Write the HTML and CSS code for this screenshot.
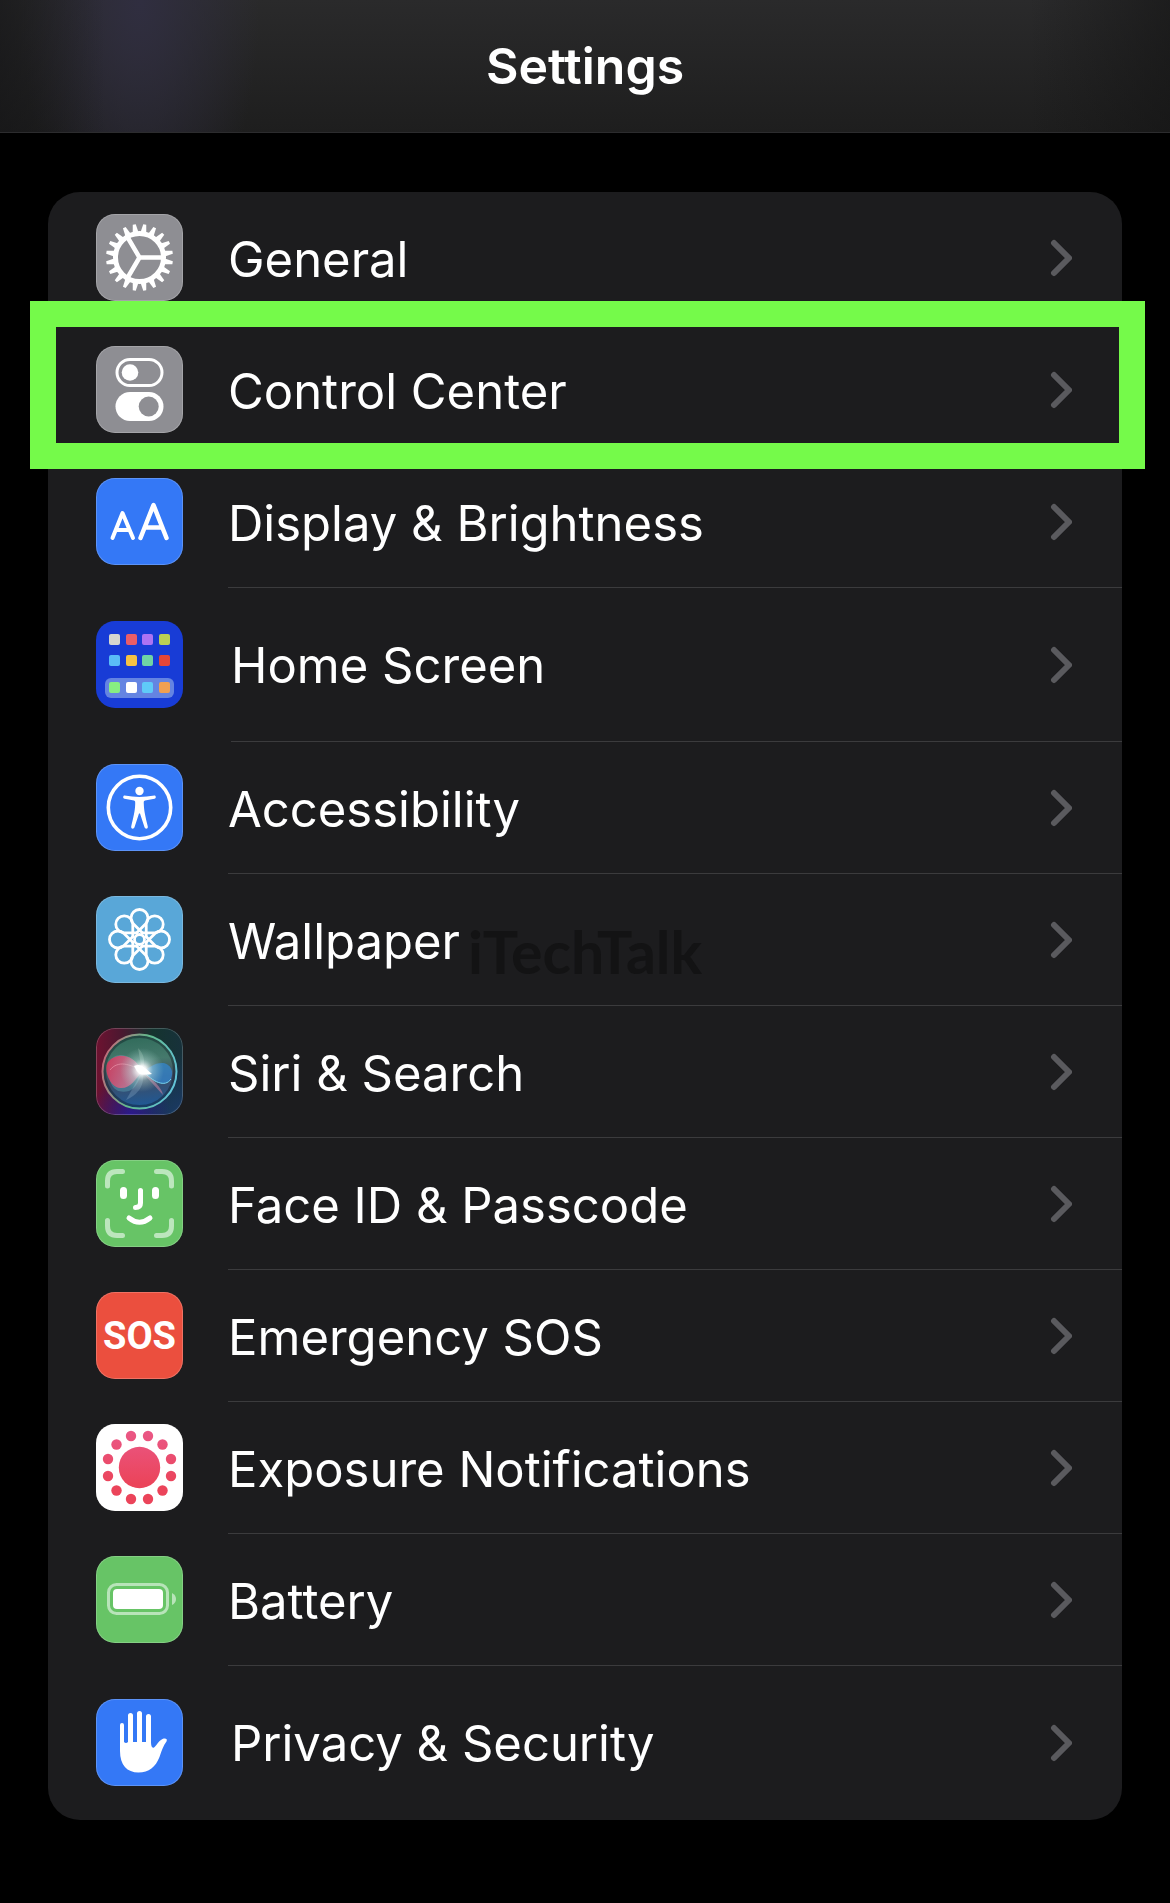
FILE: index.html
```html
<!DOCTYPE html>
<html lang="en">
<head>
    <meta charset="UTF-8">
    <meta name="viewport" content="width=device-width, initial-scale=1.0">
    <title>Settings</title>
    <link rel="stylesheet" href="styles.css">
</head>
<body>
    <header class="navbar">
        <h1>Settings</h1>
    </header>

    <main class="content">
        <ul class="settings-list">
            <li>
                <a class="row" href="#general">
                    <svg class="icon gray" viewBox="0 0 87 87">
                        <circle cx="43.5" cy="43.5" r="24" fill="none" stroke="#fff" stroke-width="5"/>
                        <path d="M43.5 43.5H66M43.5 43.5L32 24M43.5 43.5L32 63" fill="none" stroke="#fff" stroke-width="4.5"/>
                        <g id="teeth" fill="#fff"></g>
                    </svg>
                    <span class="label">General</span>
                    <svg class="chevron" viewBox="0 0 22 38"><path d="M4 4l15 15L4 34"/></svg>
                </a>
            </li>
            <li class="highlighted">
                <a class="row" href="#control-center">
                    <svg class="icon gray" viewBox="0 0 87 87">
                        <rect x="21" y="13.5" width="45" height="26" rx="13" fill="none" stroke="#fff" stroke-width="3"/>
                        <circle cx="34" cy="26.5" r="8.3" fill="#fff"/>
                        <rect x="19.5" y="46" width="48" height="29" rx="14.5" fill="#fff"/>
                        <circle cx="52.7" cy="60.5" r="10" fill="#8e8e93"/>
                    </svg>
                    <span class="label">Control Center</span>
                    <svg class="chevron" viewBox="0 0 22 38"><path d="M4 4l15 15L4 34"/></svg>
                </a>
            </li>
            <li>
                <a class="row" href="#display">
                    <svg class="icon blue" viewBox="0 0 87 87">
                        <g fill="none" stroke="#fff" stroke-linecap="round" stroke-linejoin="round">
                            <path d="M16.5 60L26.5 35L37 60M20 52H33" stroke-width="4"/>
                            <path d="M44.5 60L57.5 27L70.5 60M49 49.5H66" stroke-width="4.5"/>
                        </g>
                    </svg>
                    <span class="label">Display &amp; Brightness</span>
                    <svg class="chevron" viewBox="0 0 22 38"><path d="M4 4l15 15L4 34"/></svg>
                </a>
            </li>
            <li>
                <a class="row tall" href="#home-screen">
                    <svg class="icon navy" viewBox="0 0 87 87">
                        <rect x="9" y="57" width="69" height="20" rx="6" fill="#6484e2"/>
                        <rect x="13" y="13" width="11" height="11" rx="2" fill="#d6d7cf"/>
                        <rect x="30" y="13" width="11" height="11" rx="2" fill="#ea5d68"/>
                        <rect x="46" y="13" width="11" height="11" rx="2" fill="#ac73f4"/>
                        <rect x="63" y="13" width="11" height="11" rx="2" fill="#b9d054"/>
                        <rect x="13" y="34" width="11" height="11" rx="2" fill="#5abcf7"/>
                        <rect x="30" y="34" width="11" height="11" rx="2" fill="#f6c244"/>
                        <rect x="46" y="34" width="11" height="11" rx="2" fill="#6fd5a5"/>
                        <rect x="63" y="34" width="11" height="11" rx="2" fill="#e54637"/>
                        <rect x="13" y="61" width="11" height="11" rx="2" fill="#87ee82"/>
                        <rect x="30" y="61" width="11" height="11" rx="2" fill="#fff"/>
                        <rect x="46" y="61" width="11" height="11" rx="2" fill="#5fcaf8"/>
                        <rect x="63" y="61" width="11" height="11" rx="2" fill="#f0a052"/>
                    </svg>
                    <span class="label">Home Screen</span>
                    <svg class="chevron" viewBox="0 0 22 38"><path d="M4 4l15 15L4 34"/></svg>
                </a>
            </li>
            <li>
                <a class="row" href="#accessibility">
                    <svg class="icon blue" viewBox="0 0 87 87">
                        <circle cx="43.5" cy="43.5" r="31.2" fill="none" stroke="#fff" stroke-width="3.6"/>
                        <circle cx="43.5" cy="27" r="4.2" fill="#fff"/>
                        <path d="M28.5 31.6C27 31.6 26.5 34.4 28.5 34.8L38 36.5C39.3 36.8 39.3 38 39.2 40C39 47 37.5 53 35.2 62.5C34.8 65 37.8 65.5 38.5 63.3L43 49.5H44L48.5 63.3C49.2 65.5 52.2 65 51.8 62.5C49.5 53 48 47 47.8 40C47.7 38 47.7 36.8 49 36.5L58.5 34.8C60.5 34.4 60 31.6 58.5 31.6C48 33.5 39 33.5 28.5 31.6Z" fill="#fff"/>
                    </svg>
                    <span class="label">Accessibility</span>
                    <svg class="chevron" viewBox="0 0 22 38"><path d="M4 4l15 15L4 34"/></svg>
                </a>
            </li>
            <li>
                <a class="row" href="#wallpaper">
                    <svg class="icon sky" viewBox="0 0 87 87">
                        <g id="petals" fill="none" stroke="#fff" stroke-width="2.8"></g>
                        <circle cx="43.5" cy="43.5" r="5" fill="none" stroke="#fff" stroke-width="2.8"/>
                    </svg>
                    <span class="label">Wallpaper</span>
                    <svg class="chevron" viewBox="0 0 22 38"><path d="M4 4l15 15L4 34"/></svg>
                </a>
            </li>
            <li>
                <a class="row" href="#siri">
                    <svg class="icon siri" viewBox="0 0 87 87">
                        <defs>
                            <linearGradient id="siriOrb" x1="0.4" y1="0" x2="0.5" y2="1">
                                <stop offset="0" stop-color="#2f6a59"/>
                                <stop offset="0.35" stop-color="#45796c"/>
                                <stop offset="0.6" stop-color="#3f4c62"/>
                                <stop offset="1" stop-color="#1d5a9a"/>
                            </linearGradient>
                            <linearGradient id="siriRim" x1="0" y1="0.3" x2="1" y2="0.6">
                                <stop offset="0" stop-color="#c4697a"/>
                                <stop offset="0.5" stop-color="#61b98c"/>
                                <stop offset="1" stop-color="#62c3d8"/>
                            </linearGradient>
                            <linearGradient id="siriPink" x1="0" y1="0" x2="1" y2="0.3">
                                <stop offset="0" stop-color="#e02c53"/>
                                <stop offset="1" stop-color="#c783a0"/>
                            </linearGradient>
                            <radialGradient id="siriGlow">
                                <stop offset="0" stop-color="#fff"/>
                                <stop offset="0.2" stop-color="#fff" stop-opacity="0.9"/>
                                <stop offset="0.5" stop-color="#c5e8e4" stop-opacity="0.4"/>
                                <stop offset="1" stop-color="#9fd5cb" stop-opacity="0"/>
                            </radialGradient>
                        </defs>
                        <circle cx="43.5" cy="43.5" r="37" fill="url(#siriOrb)"/>
                        <circle cx="43.5" cy="43.5" r="35" fill="none" stroke="#0c1620" stroke-opacity="0.4" stroke-width="3"/>
                        <circle cx="43.5" cy="43.5" r="37" fill="none" stroke="url(#siriRim)" stroke-width="2"/>
                        <path d="M46 43C36 24 18 22 12 36C12 60 20 66 33 63C40 61 44 50 46 43Z" fill="#5aa5b5" fill-opacity="0.45"/>
                        <path d="M46 43C38 25 20 24 12 34C7 42 14 59 24 60C34 61 40 51 46 43Z" fill="url(#siriPink)" fill-opacity="0.85"/>
                        <path d="M14 42C22 32 34 36 46 43" fill="none" stroke="#f1a0b4" stroke-opacity="0.6"/>
                        <path d="M47 43C57 54 69 60 75 51C79 42 73 35 66 35C58 35 53 40 47 43Z" fill="#3387cf" fill-opacity="0.75"/>
                        <path d="M47 43C57 54 69 60 75 51" fill="none" stroke="#76d8f4"/>
                        <path d="M46 44L30 72C42 67 50 56 46 44Z" fill="#a9c8df" fill-opacity="0.25"/>
                        <path d="M46 44L67 67C66 60 57 51 46 44Z" fill="#c2819f" fill-opacity="0.6"/>
                        <path d="M46 43L42 20C48 26 50 34 46 43Z" fill="#c2dfce" fill-opacity="0.25"/>
                        <circle cx="46" cy="42" r="22" fill="url(#siriGlow)"/>
                        <path d="M38 38Q44 35 49 40L56 46Q49 47 44 46Q40 43 38 38Z" fill="#fff"/>
                    </svg>
                    <span class="label">Siri &amp; Search</span>
                    <svg class="chevron" viewBox="0 0 22 38"><path d="M4 4l15 15L4 34"/></svg>
                </a>
            </li>
            <li>
                <a class="row" href="#face-id">
                    <svg class="icon green" viewBox="0 0 87 87">
                        <g fill="none" stroke-linecap="round">
                            <path d="M11.5 26V21Q11.5 11.5 21 11.5H26.5M60.5 11.5H66Q75.5 11.5 75.5 21V26M75.5 60.5V66Q75.5 75.5 66 75.5H60.5M26.5 75.5H21Q11.5 75.5 11.5 66V60.5" stroke="#bce6bd" stroke-width="5"/>
                            <path d="M27.5 30.5V35.5M59.5 30.5V35.5" stroke="#fff" stroke-width="7"/>
                            <path d="M44.5 30.5V43Q44.5 47.5 39.5 47.5" stroke="#fff" stroke-width="5"/>
                            <path d="M33 58Q43.5 66.5 54 58" stroke="#fff" stroke-width="5"/>
                        </g>
                    </svg>
                    <span class="label">Face ID &amp; Passcode</span>
                    <svg class="chevron" viewBox="0 0 22 38"><path d="M4 4l15 15L4 34"/></svg>
                </a>
            </li>
            <li>
                <a class="row" href="#sos">
                    <span class="icon red sos">SOS</span>
                    <span class="label">Emergency SOS</span>
                    <svg class="chevron" viewBox="0 0 22 38"><path d="M4 4l15 15L4 34"/></svg>
                </a>
            </li>
            <li>
                <a class="row" href="#exposure">
                    <svg class="icon white" viewBox="0 0 87 87">
                        <defs>
                            <linearGradient id="exposure" gradientUnits="userSpaceOnUse" x1="0" y1="8" x2="0" y2="60">
                                <stop offset="0" stop-color="#ea5785"/>
                                <stop offset="1" stop-color="#eb445a"/>
                            </linearGradient>
                        </defs>
                        <g fill="url(#exposure)">
                            <circle cx="43.5" cy="43.5" r="20.7"/>
                            <circle cx="35" cy="12" r="5.2"/>
                            <circle cx="52" cy="12" r="5.2"/>
                            <circle cx="20.5" cy="20.5" r="5.2"/>
                            <circle cx="66.5" cy="20.5" r="5.2"/>
                            <circle cx="12" cy="35" r="5.2"/>
                            <circle cx="75" cy="35" r="5.2"/>
                            <circle cx="12" cy="52" r="5.2"/>
                            <circle cx="75" cy="52" r="5.2"/>
                            <circle cx="20.5" cy="66.5" r="5.2"/>
                            <circle cx="66.5" cy="66.5" r="5.2"/>
                            <circle cx="35" cy="75" r="5.2"/>
                            <circle cx="52" cy="75" r="5.2"/>
                        </g>
                    </svg>
                    <span class="label">Exposure Notifications</span>
                    <svg class="chevron" viewBox="0 0 22 38"><path d="M4 4l15 15L4 34"/></svg>
                </a>
            </li>
            <li>
                <a class="row" href="#battery">
                    <svg class="icon green" viewBox="0 0 87 87">
                        <rect x="12.5" y="28.5" width="59" height="29" rx="8" fill="none" stroke="#b8e4b9" stroke-width="3"/>
                        <rect x="17" y="33" width="50" height="20" rx="4" fill="#fff"/>
                        <path d="M76 37Q80 39 80 43T76 49Z" fill="#b8e4b9"/>
                    </svg>
                    <span class="label">Battery</span>
                    <svg class="chevron" viewBox="0 0 22 38"><path d="M4 4l15 15L4 34"/></svg>
                </a>
            </li>
            <li>
                <a class="row tall" href="#privacy">
                    <svg class="icon blue" viewBox="0 0 87 87">
                        <path d="M34.5 45V16.5M43.5 45V14.5M52.5 45V17.5" fill="none" stroke="#fff" stroke-width="5" stroke-linecap="round"/>
                        <path d="M24 26Q24 24 26 24T28 26V43Q30 45 32 43H55C55 47 56 49.5 58 48.5C60.5 47 62 42 66.5 40C69 39 72 39.5 70.5 42.5C67.5 46 66 51 63.5 58C59.5 68 53 73.5 42.5 73.5C31 73.5 24 66 24 52Z" fill="#fff"/>
                    </svg>
                    <span class="label">Privacy &amp; Security</span>
                    <svg class="chevron" viewBox="0 0 22 38"><path d="M4 4l15 15L4 34"/></svg>
                </a>
            </li>
        </ul>
    </main>

    <div class="watermark">iTechTalk</div>

    <script src="icons.js"></script>
</body>
</html>
```
FILE: styles.css
```css
* {
    margin: 0;
    padding: 0;
    box-sizing: border-box;
}

body {
    position: relative;
    min-height: 100vh;
    background: #000;
    color: #fff;
    font-family: Inter, Roboto, sans-serif;
}

.navbar {
    padding: 36px 16px;
    text-align: center;
    background:
        linear-gradient(90deg, rgba(20, 20, 22, 0.6) 0%, rgba(20, 20, 22, 0) 9%, rgba(20, 20, 20, 0) 88%, rgba(20, 20, 20, 0.6) 100%),
        radial-gradient(ellipse 120px 260px at 140px 0, #302e40, rgba(48, 46, 64, 0)),
        linear-gradient(180deg, #2a2a2b, #1e1e1e);
    border-bottom: 1px solid #2c2c2e;
}

.navbar h1 {
    font-size: 50px;
    line-height: 60px;
    font-weight: 600;
}

.content {
    padding: 59px 48px 83px;
}

.settings-list {
    list-style: none;
    background: #1c1c1e;
    border-radius: 32px;
}

.row {
    display: flex;
    align-items: center;
    height: 132px;
    padding-left: 48px;
    color: inherit;
    text-decoration: none;
    background: linear-gradient(#3b3b3d, #3b3b3d) right bottom / calc(100% - 180px) 1px no-repeat;
    background-origin: border-box;
    border-bottom: 1px solid transparent;
}

.row.tall {
    height: 154px;
    background-size: calc(100% - 183px) 1px;
}

.settings-list li:last-child .row {
    background: none;
}

.icon {
    flex: none;
    width: 87px;
    height: 87px;
    border-radius: 19px;
    box-shadow: inset 0 0 0 1px rgba(255, 255, 255, 0.2);
}

.gray {
    background: #8e8e93;
}

.blue {
    background: #3478f6;
}

.navy {
    background: #183cd6;
    box-shadow: none;
}

.sky {
    background: #59a7d8;
}

.green {
    background: #67c466;
}

.red {
    background: #eb4f3e;
}

.white {
    background: #fff;
}

.siri {
    background:
        radial-gradient(circle at 40% 100%, rgba(42, 24, 150, 0.9), rgba(42, 24, 150, 0) 40%),
        radial-gradient(circle at 100% 100%, #1a3a66, rgba(26, 58, 102, 0) 50%),
        linear-gradient(90deg, #6e1230, #4a1830 30%, #15342f 65%, #17313b);
}

.sos {
    display: grid;
    place-items: center;
    font-family: Roboto, sans-serif;
    font-size: 38px;
    line-height: 1;
    font-weight: 700;
}

.label {
    flex: 1;
    margin-left: 45px;
    padding-top: 4px;
    font-size: 49px;
    line-height: 60px;
}

.row.tall .label {
    margin-left: 48px;
    padding-top: 2px;
}

.chevron {
    flex: none;
    width: 22px;
    height: 38px;
    margin-right: 50px;
    fill: none;
    stroke: #5a5a5e;
    stroke-width: 6;
    stroke-linecap: round;
    stroke-linejoin: round;
}

/* Green frame drawn over the list around one row */
.highlighted {
    position: relative;
}

.highlighted::after {
    content: "";
    position: absolute;
    inset: -23px -23px -13px -18px;
    border: 26px solid #75fa4a;
    pointer-events: none;
}

.watermark {
    position: absolute;
    top: 50%;
    left: 50%;
    transform: translate(-50%, -50%);
    color: #131314;
    font-family: Lato, sans-serif;
    font-size: 59px;
    line-height: 60px;
    font-weight: 700;
    pointer-events: none;
}
```
FILE: icons.js
```js
const SVG_NS = 'http://www.w3.org/2000/svg';

// Repeat one path around the centre of an 87x87 icon
function ring(id, d, count, offset) {
    const group = document.getElementById(id);
    for (let i = 0; i < count; i++) {
        const path = document.createElementNS(SVG_NS, 'path');
        path.setAttribute('d', d);
        path.setAttribute('transform', `rotate(${offset + i * 360 / count} 43.5 43.5)`);
        group.appendChild(path);
    }
}

ring('teeth', 'M40.5 19L42 10H45L46.5 19Z', 20, 9);
ring('petals', 'M47 37.5L37.5 28A8.5 8.5 0 1 1 49.5 28L40 37.5', 8, 0);
```
